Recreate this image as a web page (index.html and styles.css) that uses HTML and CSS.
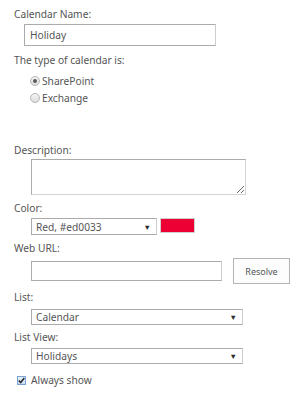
FILE: index.html
```html
<!DOCTYPE html>
<html lang="en">
<head>
  <meta charset="UTF-8" />
  <title>Calendar Settings</title>
  <link rel="stylesheet" href="styles.css">
</head>
<body>
  <div class="form">
    <div class="label">Calendar Name:</div>
    <input type="text" class="text-input name-input" value="Holiday" />

    <div class="label type-label">The type of calendar is:</div>
    <div class="radio-row first-radio">
      <span class="radio checked"></span>
      <span>SharePoint</span>
    </div>
    <div class="radio-row">
      <span class="radio"></span>
      <span>Exchange</span>
    </div>

    <div class="label desc-label">Description:</div>
    <textarea class="desc-input"></textarea>

    <div class="label color-label">Color:</div>
    <div class="color-row">
      <div class="select color-select">
        <span>Red, #ed0033</span>
        <span class="arrow">&#9660;</span>
      </div>
      <div class="swatch"></div>
    </div>

    <div class="label url-label">Web URL:</div>
    <div class="url-row">
      <input type="text" class="text-input url-input" />
      <button class="resolve">Resolve</button>
    </div>

    <div class="label list-label">List:</div>
    <div class="select wide-select">
      <span>Calendar</span>
      <span class="arrow">&#9660;</span>
    </div>

    <div class="label view-label">List View:</div>
    <div class="select wide-select view-select">
      <span>Holidays</span>
      <span class="arrow">&#9660;</span>
    </div>

    <div class="check-row">
      <span class="checkbox">
        <svg width="7" height="7" viewBox="0 0 7 7">
          <path d="M0.8 3.5 L2.7 5.6 L6.3 1.1" fill="none" stroke="#2b2b2b" stroke-width="1.6" />
        </svg>
      </span>
      <span>Always show</span>
    </div>
  </div>
</body>
</html>
```

FILE: styles.css
```css
* {
  box-sizing: border-box;
}

body {
  margin: 0;
  background-color: #ffffff;
  color: #555555;
  font-family: 'Segoe UI', 'Noto Sans', sans-serif;
  font-size: 10.2px;
}

.form {
  padding: 7px 0 0 14px;
  display: flex;
  flex-direction: column;
  align-items: flex-start;
}

.label {
  line-height: 14px;
  height: 14px;
}

/* inputs */

.text-input {
  border: 1px solid #ababab;
  border-right-color: #cdcdcd;
  font-family: inherit;
  font-size: 10.2px;
  color: #555555;
  padding: 0 5px;
  outline: none;
  margin: 0;
  background-color: #ffffff;
}

.name-input {
  width: 192px;
  height: 22px;
  margin: 3px 0 0 10px;
}

.type-label {
  margin-top: 7px;
}

.radio-row {
  display: flex;
  align-items: center;
  gap: 2px;
  height: 17px;
  margin-left: 16px;
}

.first-radio {
  margin-top: 5px;
}

.radio {
  width: 10px;
  height: 10px;
  border-radius: 50%;
  border: 1px solid #b5b5b5;
  background: linear-gradient(#f4f4f4, #dedede);
  display: flex;
  align-items: center;
  justify-content: center;
}

.radio.checked::after {
  content: "";
  width: 4px;
  height: 4px;
  border-radius: 50%;
  background-color: #5a5a5a;
}

.desc-label {
  margin-top: 37px;
}

.desc-input {
  width: 215px;
  height: 36px;
  margin: 2px 0 0 17px;
  border: 1px solid #ababab;
  border-right-color: #d4d4d4;
  border-bottom-color: #d4d4d4;
  font-family: inherit;
  padding: 2px 5px;
  outline: none;
  resize: both;
}

.color-label {
  margin-top: 6px;
}

.color-row {
  display: flex;
  align-items: flex-start;
  gap: 3px;
  margin: 3px 0 0 17px;
}

/* selects */

.select {
  display: flex;
  align-items: center;
  justify-content: space-between;
  border: 1px solid #ababab;
  border-right-color: #cdcdcd;
  line-height: 14px;
  padding: 0 5px 0 4px;
  color: #555555;
  background-color: #ffffff;
}

.arrow {
  font-size: 7.5px;
  color: #2b2b2b;
}

.color-select {
  width: 126px;
  height: 17px;
}

.swatch {
  width: 35px;
  height: 15px;
  background-color: #ed0033;
  border: 1px solid #cfcfcf;
}

.url-label {
  margin-top: 6px;
}

.url-row {
  display: flex;
  align-items: center;
  gap: 11px;
  margin: 3px 0 0 17px;
}

.url-input {
  width: 191px;
  height: 20px;
}

.resolve {
  width: 57px;
  height: 26px;
  background-color: #fdfdfd;
  border: 1px solid #b3b3b3;
  font-family: inherit;
  font-size: 9px;
  color: #555555;
  padding: 0;
}

.list-label {
  margin-top: 6px;
}

.wide-select {
  width: 212px;
  height: 16px;
  margin: 5px 0 0 17px;
}

.view-label {
  margin-top: 5px;
}

.view-select {
  margin-top: 4px;
}

.check-row {
  display: flex;
  align-items: center;
  gap: 5px;
  height: 14px;
  margin: 9px 0 0 3px;
}

.checkbox {
  width: 9px;
  height: 9px;
  border: 1px solid #7aa3d3;
  background: linear-gradient(#e8f1fb, #c9ddf3);
  display: flex;
  align-items: center;
  justify-content: center;
}
```
